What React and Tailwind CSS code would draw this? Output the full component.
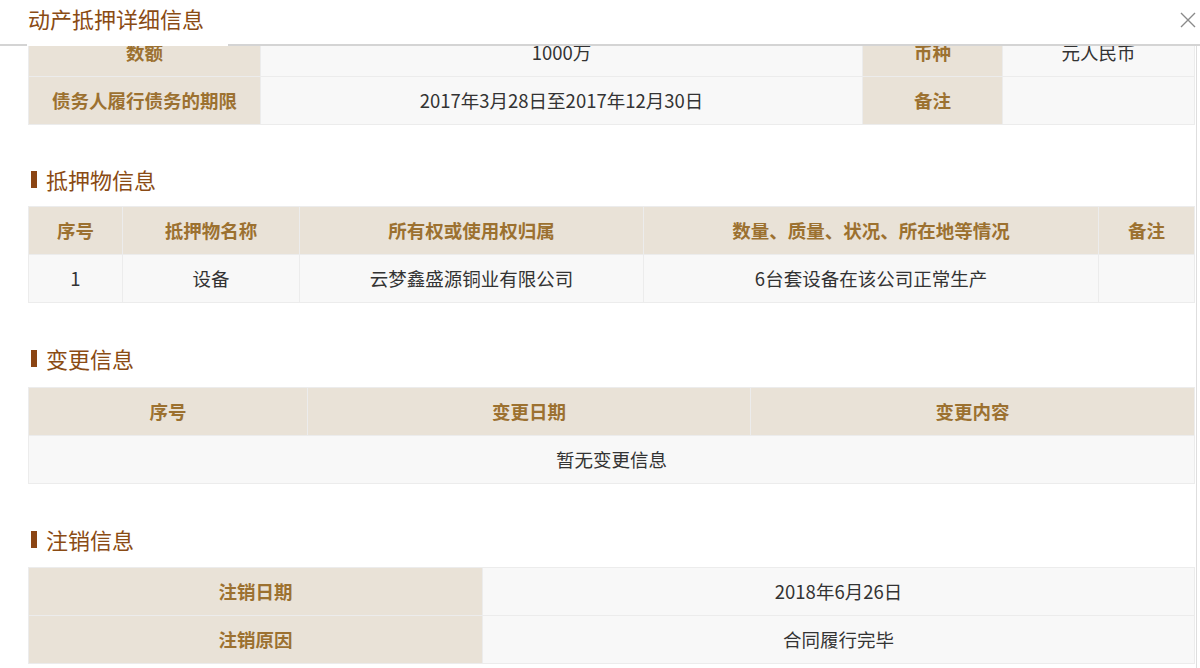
import React from 'react';

const FONT = { fontFamily: '"Microsoft YaHei", "Noto Sans CJK SC", "Noto Sans", sans-serif' };

const th = 'h-[48px] border border-[#ececec] bg-[#e9e2d7] text-[#9c7130] font-bold text-center p-0';
const td = 'h-[48px] border border-[#ececec] bg-[#f8f8f8] text-[#333] text-center p-0';

const SectionTitle = ({ children }) => (
  <div className="flex items-center h-[28px] pl-[3px] text-[22px] text-[#8a4b14] leading-none">
    <span className="w-[6px] h-[17px] bg-[#8b4513] mr-[9px]" />
    {children}
  </div>
);

const BaseInfo = () => (
  <table className="w-[1166px] table-fixed border-collapse">
    <colgroup>
      <col className="w-[232px]" />
      <col className="w-[602px]" />
      <col className="w-[140px]" />
      <col className="w-[192px]" />
    </colgroup>
    <tbody>
      <tr>
        <td className={th}>数额</td>
        <td className={td}>1000万</td>
        <td className={th}>币种</td>
        <td className={td}>元人民币</td>
      </tr>
      <tr>
        <td className={th}>债务人履行债务的期限</td>
        <td className={td}>2017年3月28日至2017年12月30日</td>
        <td className={th}>备注</td>
        <td className={td}></td>
      </tr>
    </tbody>
  </table>
);

const Collateral = () => (
  <table className="w-[1166px] table-fixed border-collapse">
    <colgroup>
      <col className="w-[94px]" />
      <col className="w-[177px]" />
      <col className="w-[344px]" />
      <col className="w-[455px]" />
      <col className="w-[96px]" />
    </colgroup>
    <thead>
      <tr>
        <th className={th}>序号</th>
        <th className={th}>抵押物名称</th>
        <th className={th}>所有权或使用权归属</th>
        <th className={th}>数量、质量、状况、所在地等情况</th>
        <th className={th}>备注</th>
      </tr>
    </thead>
    <tbody>
      <tr>
        <td className={td}>1</td>
        <td className={td}>设备</td>
        <td className={td}>云梦鑫盛源铜业有限公司</td>
        <td className={td}>6台套设备在该公司正常生产</td>
        <td className={td}></td>
      </tr>
    </tbody>
  </table>
);

const Changes = () => (
  <table className="w-[1166px] table-fixed border-collapse">
    <colgroup>
      <col className="w-[279px]" />
      <col className="w-[443px]" />
      <col className="w-[444px]" />
    </colgroup>
    <thead>
      <tr>
        <th className={th}>序号</th>
        <th className={th}>变更日期</th>
        <th className={th}>变更内容</th>
      </tr>
    </thead>
    <tbody>
      <tr>
        <td className={td} colSpan={3}>暂无变更信息</td>
      </tr>
    </tbody>
  </table>
);

const Cancel = () => (
  <table className="w-[1166px] table-fixed border-collapse">
    <colgroup>
      <col className="w-[454px]" />
      <col className="w-[712px]" />
    </colgroup>
    <tbody>
      <tr>
        <td className={th}>注销日期</td>
        <td className={td}>2018年6月26日</td>
      </tr>
      <tr>
        <td className={th}>注销原因</td>
        <td className={td}>合同履行完毕</td>
      </tr>
    </tbody>
  </table>
);

export default function App() {
  return (
    <div className="w-[1200px] h-[668px] bg-white overflow-hidden text-[18.5px]" style={FONT}>
      {/* header */}
      <div className="relative h-[46px] border-b-2 border-[#d4d4d4] flex items-start">
        <div className="ml-[27px] w-[201px] h-[46px] border-b-2 border-white pl-px pt-[3px] text-[22px] text-[#8a4b14] leading-[30px]">
          动产抵押详细信息
        </div>
        <button className="absolute right-[3px] top-[11px] w-[18px] h-[18px] text-[#8a8a8a]">
          <svg viewBox="0 0 18 18" className="w-[18px] h-[18px]" fill="none" stroke="currentColor" strokeWidth="1.4">
            <path d="M2 2 L16 16 M16 2 L2 16" />
          </svg>
        </button>
      </div>

      {/* scrolled body */}
      <div className="h-[622px] w-[1197px] overflow-hidden border-r border-[#dedede]">
        <div className="-mt-[18px] pl-[28px] flex flex-col">
          <BaseInfo />
          <div className="mt-[40px]"><SectionTitle>抵押物信息</SectionTitle></div>
          <div className="mt-[13px]"><Collateral /></div>
          <div className="mt-[41px]"><SectionTitle>变更信息</SectionTitle></div>
          <div className="mt-[15px]"><Changes /></div>
          <div className="mt-[41px]"><SectionTitle>注销信息</SectionTitle></div>
          <div className="mt-[14px]"><Cancel /></div>
        </div>
      </div>
    </div>
  );
}
